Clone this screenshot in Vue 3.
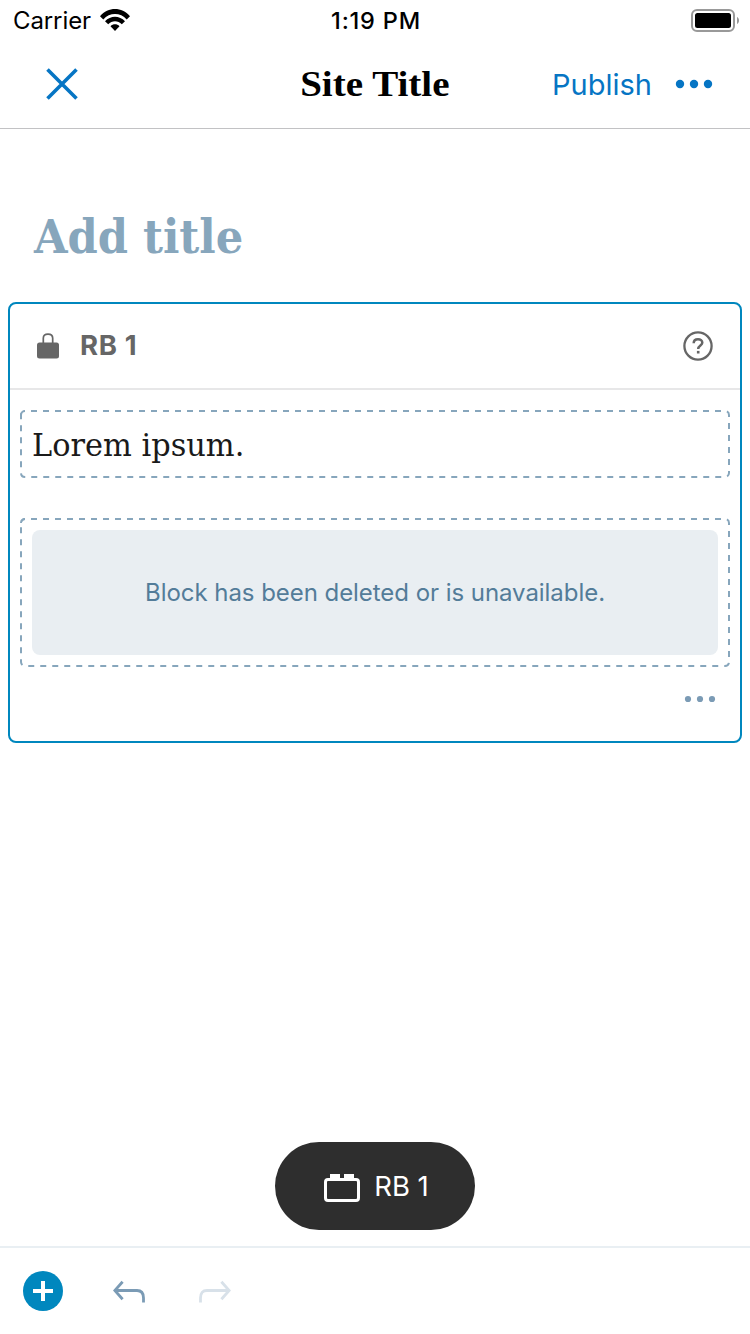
<script setup>
const frames = [
  { id: 'text', height: 68 },
  { id: 'missing', height: 149 },
]
</script>

<template>
  <div class="screen">
    <div class="status">
      <div class="carrier">
        <span class="carrier-name">Carrier</span>
        <svg class="wifi" width="30" height="22" viewBox="0 0 30 22">
          <path d="M0 7.2C8.2-2.4 21.800-2.400 30 7.200L26.700 10.400C20.400 3.300 9.600 3.300 3.300 10.400Z" />
          <path d="M5 12.300C10.500 6.300 19.500 6.300 25 12.300L21.800 15.300C18 11.300 12 11.300 8.200 15.300Z" />
          <path d="M10.500 17.200C13 14.600 17 14.600 19.500 17.200L15 22Z" />
        </svg>
      </div>
      <span class="time">1:19 PM</span>
      <svg class="battery" width="48" height="23" viewBox="0 0 48 23">
        <rect x="1" y="1" width="42" height="21" rx="5" fill="none" stroke="#999" stroke-width="2" />
        <rect x="4" y="4" width="36" height="15" rx="2.500" />
        <path d="M46 8C48.700 9 48.700 14 46 15Z" fill="#999" />
      </svg>
    </div>

    <header class="navbar">
      <svg class="close" width="32" height="32" viewBox="0 0 32 32">
        <path d="M1.500 1.500L30.500 30.500M30.500 1.500L1.500 30.500" fill="none" stroke="#0675c4" stroke-width="3.600" />
      </svg>
      <h1 class="site-title"><span>Site Title</span></h1>
      <div class="nav-actions">
        <span class="publish">Publish</span>
        <svg width="38" height="10" viewBox="0 0 38 10" fill="#0675c4">
          <circle cx="5" cy="5" r="4.200" /><circle cx="19" cy="5" r="4.200" /><circle cx="33" cy="5" r="4.200" />
        </svg>
      </div>
    </header>

    <main class="editor">
      <h2 class="post-title"><span>Add title</span></h2>

      <section class="card">
        <div class="card-head">
          <svg class="lock" width="22" height="26" viewBox="0 0 22 26" fill="#666">
            <rect x="0" y="9.500" width="22" height="16" rx="2.500" />
            <path d="M6.300 11V5.300Q6.300 1.100 11 1.100Q15.700 1.100 15.700 5.300V11" fill="none" stroke="#666" stroke-width="1.700" />
          </svg>
          <span class="card-name">RB 1</span>
          <svg class="help" width="30" height="30" viewBox="0 0 30 30">
            <circle cx="15" cy="15" r="13.600" fill="none" stroke="#666" stroke-width="2.300" />
            <path d="M10.700 12.300C10.700 9.800 12.500 8.200 15 8.200C17.500 8.200 19.300 9.700 19.300 11.800C19.300 14.500 15.200 14.600 15.200 18" fill="none" stroke="#666" stroke-width="2.500" />
            <rect x="13.900" y="19.900" width="2.600" height="2.600" fill="#666" />
          </svg>
        </div>
        <div v-for="f in frames" :key="f.id" class="frame" :class="f.id">
          <svg class="dashes" width="710" :height="f.height">
            <rect x="1" y="1" width="708" :height="f.height - 2" rx="4" />
            <path d="M1 5A4 4 0 0 1 5 1" />
          </svg>
          <p v-if="f.id === 'text'" class="paragraph"><span>Lorem ipsum.</span></p>
          <div v-else class="notice"><span>Block has been deleted or is unavailable.</span></div>
        </div>
        <div class="card-foot">
          <svg width="32" height="8" viewBox="0 0 32 8" fill="#7b9bb5">
            <circle cx="4" cy="4" r="3.100" /><circle cx="16" cy="4" r="3.100" /><circle cx="28" cy="4" r="3.100" />
          </svg>
        </div>
      </section>
    </main>

    <div class="pill">
      <svg width="36" height="28" viewBox="0 0 36 28">
        <rect x="1.500" y="5.500" width="33" height="21" rx="2.500" fill="none" stroke="#fff" stroke-width="3" />
        <path d="M6 0H16V5H6ZM20 0H30V5H20Z" fill="#fff" />
      </svg>
      <span>RB 1</span>
    </div>

    <footer class="toolbar">
      <svg class="add" width="40" height="40" viewBox="0 0 40 40">
        <circle cx="20" cy="20" r="20" fill="#0087be" />
        <path d="M20 10V30M10 20H30" stroke="#fff" stroke-width="4" />
      </svg>
      <svg class="undo" width="32" height="24" viewBox="0 0 32 24" fill="none" stroke="#7b9bb5" stroke-width="2.800">
        <path d="M9.600 1.700L1.800 10.500L9.600 19.300M2 10.500H24Q30.500 10.500 30.500 18V22.500" />
      </svg>
      <svg class="redo" width="32" height="24" viewBox="0 0 32 24" fill="none" stroke="#d8e1e9" stroke-width="2.800">
        <path d="M22.400 1.700L30.200 10.500L22.400 19.300M30 10.500H8Q1.500 10.500 1.500 18V22.500" />
      </svg>
    </footer>
  </div>
</template>

<style>
body {
  margin: 0;
  background: #fff;
}
</style>

<style scoped>
.screen {
  width: 750px;
  height: 1334px;
  display: flex;
  flex-direction: column;
  background: #fff;
  color: #000;
  font-family: Inter, "Liberation Sans", sans-serif;
  overflow: hidden;
}
svg {
  display: block;
  flex: none;
}
h1, h2, p {
  margin: 0;
}
span {
  white-space: nowrap;
}
.status {
  height: 40px;
  display: grid;
  grid-template-columns: 1fr auto 1fr;
  align-items: center;
  padding: 0 11px 0 13px;
  box-sizing: border-box;
}
.carrier {
  display: flex;
  align-items: center;
  gap: 9px;
  font-size: 24px;
  letter-spacing: -0.1px;
}
.time {
  font-size: 23.500px;
  font-weight: 500;
  letter-spacing: 0.8px;
}
.battery {
  justify-self: end;
}
.navbar {
  height: 88px;
  border-bottom: 1px solid #c2c2c4;
  display: grid;
  grid-template-columns: 1fr auto 1fr;
  align-items: center;
  padding: 0 37px;
}
.close {
  margin-left: 9px;
}
.site-title {
  font: bold 36px/44px "Liberation Serif", serif;
}
.site-title span {
  display: inline-block;
  transform: scaleX(1.085);
}
.nav-actions {
  display: flex;
  align-items: center;
  justify-content: flex-end;
  gap: 23px;
  color: #0675c4;
}
.publish {
  font-size: 29px;
}
.editor {
  flex: 1;
}
.post-title {
  margin: 78px 0 0 34px;
  height: 60px;
  font: bold 47px/60px "DejaVu Serif Condensed", "DejaVu Serif", serif;
  color: #87a6bc;
}
.post-title span,
.paragraph span {
  display: inline-block;
  transform-origin: left center;
}
.post-title span {
  transform: scaleX(1.022);
}
.paragraph span {
  transform: scaleX(1.09);
}
.card {
  margin: 35px 8px 0;
  height: 437px;
  border: 2px solid #0087be;
  border-radius: 8px;
}
.card-head {
  height: 84px;
  border-bottom: 2px solid #e7e7e8;
  display: flex;
  align-items: center;
  padding: 0 27px;
}
.lock {
  margin-bottom: 1px;
}
.card-name {
  margin: 0 0 2px 21px;
  font-size: 27.500px;
  font-weight: 700;
  letter-spacing: 0.7px;
  color: #666;
}
.help {
  margin-left: auto;
}
.frame {
  position: relative;
  width: 710px;
  margin: 20px 10px 40px;
  box-sizing: border-box;
  padding: 12px;
}
.frame.text {
  height: 68px;
}
.frame.missing {
  height: 149px;
  margin-bottom: 28px;
}
.dashes {
  position: absolute;
  left: 0;
  top: 0;
  fill: none;
  stroke: #87a6bc;
  stroke-width: 2;
}
.dashes rect {
  stroke-dasharray: 6 6;
  stroke-dashoffset: -6;
}
.paragraph {
  font: 31px/46px "DejaVu Serif Condensed", "DejaVu Serif", serif;
  color: #1a1a1a;
}
.notice {
  height: 125px;
  display: flex;
  align-items: center;
  justify-content: center;
  border-radius: 8px;
  background: #e9eef2;
  color: #537c99;
  font-size: 24px;
  letter-spacing: -0.05px;
}
.card-foot {
  display: flex;
  justify-content: flex-end;
  padding-right: 24px;
}
.pill {
  align-self: center;
  width: 200px;
  height: 88px;
  margin-bottom: 16px;
  padding-left: 3px;
  box-sizing: border-box;
  border-radius: 44px;
  background: #2e2e2e;
  color: #fff;
  font-size: 27.500px;
  display: flex;
  align-items: center;
  justify-content: center;
  gap: 14px;
}
.pill svg {
  margin-top: 4px;
}
.toolbar {
  height: 86px;
  border-top: 2px solid #e9eff3;
  display: flex;
  align-items: center;
  padding-left: 23px;
}
.undo,
.redo {
  margin-top: 1px;
}
.undo {
  margin-left: 50px;
}
.redo {
  margin-left: 54px;
}
</style>
